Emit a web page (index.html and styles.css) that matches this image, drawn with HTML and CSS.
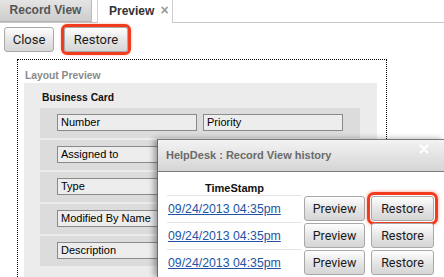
FILE: index.html
```html
<!DOCTYPE html>
<html>
<head>
<meta charset="utf-8">
<link rel="stylesheet" href="styles.css">
</head>
<body>
<div class="tabs">
  <div class="tab tab-inactive">Record View</div>
  <div class="tab tab-active">Preview<span class="tab-close">×</span></div>
</div>
<div class="toolbar">
  <button class="btn btn-close">Close</button>
  <button class="btn btn-restore highlight">Restore</button>
</div>
<div class="preview-frame">
  <div class="frame-label">Layout Preview</div>
  <div class="panel">
    <div class="panel-title">Business Card</div>
    <div class="rows">
      <div class="row"><div class="field">Number</div><div class="field">Priority</div></div>
      <div class="row"><div class="field">Assigned to</div><div class="field"></div></div>
      <div class="row"><div class="field">Type</div><div class="field"></div></div>
      <div class="row"><div class="field">Modified By Name</div><div class="field"></div></div>
      <div class="row"><div class="field">Description</div><div class="field"></div></div>
    </div>
  </div>
</div>
<div class="dialog">
  <div class="dialog-header">
    <span class="dialog-title">HelpDesk : Record View history</span>
    <svg class="dialog-x" width="10" height="10" viewBox="0 0 10 10"><path d="M1.5 1.5 L8.5 8.5 M8.5 1.5 L1.5 8.5" stroke="#fff" stroke-width="2" stroke-linecap="round"/></svg>
  </div>
  <div class="dialog-body">
    <div class="hist-head"><div class="ts-head">TimeStamp</div></div>
    <div class="hist-row">
      <div class="ts-cell"><a class="ts-link" href="#">09/24/2013 04:35pm</a></div>
      <button class="btn dbtn btn-preview">Preview</button>
      <button class="btn dbtn btn-drestore highlight-soft">Restore</button>
    </div>
    <div class="hist-row">
      <div class="ts-cell"><a class="ts-link" href="#">09/24/2013 04:35pm</a></div>
      <button class="btn dbtn btn-preview">Preview</button>
      <button class="btn dbtn btn-drestore">Restore</button>
    </div>
    <div class="hist-row">
      <div class="ts-cell"><a class="ts-link" href="#">09/24/2013 04:35pm</a></div>
      <button class="btn dbtn btn-preview">Preview</button>
      <button class="btn dbtn btn-drestore">Restore</button>
    </div>
  </div>
</div>
</body>
</html>
```
FILE: styles.css
```css
html, body {
  margin: 0;
  padding: 0;
  width: 444px;
  height: 277px;
  overflow: hidden;
  background: #fff;
  font-family: "Liberation Sans", Arial, sans-serif;
  position: relative;
}

.tabs {
  display: flex;
  height: 22px;
  border-bottom: 1px solid #c8c8c8;
}
.tab {
  box-sizing: border-box;
  font-weight: bold;
  font-size: 12px;
}
.tab-inactive {
  width: 92px;
  height: 22px;
  line-height: 20px;
  text-align: center;
  color: #555;
  background: linear-gradient(#e4e4e4, #cdcdcd);
  border-right: 1px solid #bcbcbc;
  border-bottom: 1px solid #b5b5b5;
  margin-right: 5px;
}
.tab-active {
  width: 76px;
  height: 23px;
  line-height: 20px;
  padding-left: 11px;
  color: #333;
  background: #fff;
  border-left: 1px solid #cfcfcf;
  border-right: 1px solid #cfcfcf;
}
.tab-close {
  color: #9a9a9a;
  font-size: 14px;
  font-weight: bold;
  margin-left: 6px;
}

.toolbar {
  display: flex;
  gap: 10px;
  padding: 4px 0 0 4px;
}
.btn {
  box-sizing: border-box;
  height: 25px;
  padding: 0;
  font-family: Roboto, "Liberation Sans", sans-serif;
  font-size: 13px;
  color: #1a1a1a;
  background: linear-gradient(#fefefe, #e2e2e2 60%, #d6d6d6);
  border: 1px solid #a8a8a8;
  border-radius: 3px;
}
.btn-close { width: 50px; }
.btn-restore { width: 64px; }
.highlight {
  outline: 3px solid #f13a1e;
  outline-offset: 0;
  box-shadow: 0 0 3px 3px rgba(241, 58, 30, 0.35);
}

.preview-frame {
  box-sizing: border-box;
  width: 370px;
  height: 218px;
  margin: 7px 0 0 17px;
  border: 1px dotted #000;
  border-bottom: 0;
  padding: 9px 9px 0 6px;
}
.frame-label {
  font-size: 10.3px;
  font-weight: bold;
  color: #8a8a8a;
  line-height: 14px;
  padding-left: 1px;
}
.panel {
  background: #ececec;
  padding: 8px 17px 11px 16px;
}
.panel-title {
  font-size: 10.3px;
  font-weight: bold;
  color: #111;
  line-height: 14px;
  padding-left: 2px;
  margin-bottom: 3px;
}
.rows {
  display: flex;
  flex-direction: column;
  gap: 2px;
}
.row {
  display: flex;
  gap: 6px;
  height: 30px;
  box-sizing: border-box;
  padding: 6px 0 0 17px;
  background: #dcdcdc;
}
.field {
  box-sizing: border-box;
  width: 140px;
  height: 17px;
  border: 1px solid #8a8a8a;
  background: #ededed;
  font-size: 11px;
  line-height: 15px;
  padding-left: 3px;
  color: #000;
}

.dialog {
  position: absolute;
  left: 157px;
  top: 139px;
  width: 287px;
  height: 138px;
  box-sizing: border-box;
  background: #fff;
  border-left: 1px solid #6a6a6a;
  border-top: 1px solid #7a7a7a;
  box-shadow: -3px 0 6px rgba(0, 0, 0, 0.35);
}
.dialog-header {
  position: relative;
  height: 31px;
  border-bottom: 1px solid #7a7a7a;
  background: linear-gradient(#f3f3f3, #d5d5d5);
  padding-left: 8px;
}
.dialog-title {
  font-size: 11px;
  font-weight: bold;
  color: #6a6a6a;
  line-height: 31px;
}
.dialog-x {
  position: absolute;
  left: 261px;
  top: 4px;
}
.dialog-body {
  padding-left: 9px;
}
.hist-head {
  display: flex;
  align-items: flex-end;
  height: 23px;
}
.ts-head {
  width: 135px;
  text-align: center;
  font-size: 11px;
  font-weight: bold;
  color: #111;
  line-height: 14px;
}
.hist-row {
  display: flex;
  align-items: center;
  height: 27px;
}
.ts-cell {
  box-sizing: border-box;
  width: 135px;
  height: 27px;
  border-top: 1px solid #e4e4e4;
  display: flex;
  align-items: center;
  padding-left: 1px;
}
.ts-link {
  font-size: 12.3px;
  color: #2354a4;
  text-decoration: underline;
}
.dbtn {
  font-size: 12.5px;
}
.btn-preview {
  width: 61px;
  margin-left: 2px;
}
.btn-drestore {
  width: 63px;
  margin-left: 6px;
}
.highlight-soft {
  outline: 3px solid #f13a1e;
  outline-offset: 1px;
  box-shadow: 0 0 0 1px #fff, 0 0 3px 5px rgba(241, 58, 30, 0.3);
}
```
